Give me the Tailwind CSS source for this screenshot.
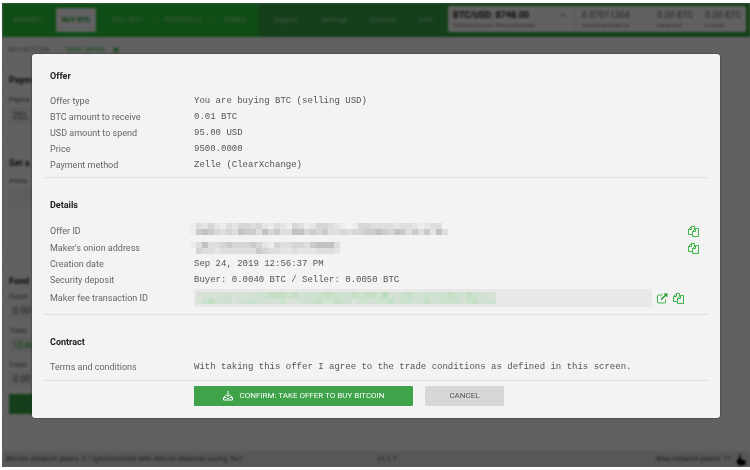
<!DOCTYPE html>
<html lang="en">
<head>
  <meta charset="UTF-8">
  <meta name="viewport" content="width=device-width, initial-scale=1.0">
  <title>Take offer</title>
  <script src="https://cdn.jsdelivr.net/npm/@tailwindcss/browser@4"></script>
</head>
<body class="bg-white font-['Roboto','Liberation_Sans',sans-serif]">

<div class="relative h-screen py-[3px] pl-[2px] overflow-hidden">

  <!-- Page behind the dialog -->
  <div class="h-full overflow-hidden bg-[#f3f3f3]" inert>
    <div class="h-full flex flex-col blur-[1px] text-[9px] leading-[10px] text-[#555]">
      <header class="flex h-[34px] shrink-0 bg-[#349e41] text-[7px] text-white/50">
        <nav class="flex items-center w-[256px] bg-[#2ac039]">
          <a href="#" class="w-[50px] text-center">MARKET</a>
          <a href="#" class="w-10 h-6 mx-1 flex items-center justify-center rounded-xs bg-[#f3f3f3] text-[#25a135] font-bold">BUY BTC</a>
          <a href="#" class="w-[54px] text-center">SELL BTC</a>
          <a href="#" class="w-[58px] text-center border-x border-white/10">PORTFOLIO</a>
          <a href="#" class="w-[46px] text-center">FUNDS</a>
        </nav>
        <nav class="flex flex-1 items-center justify-around px-1">
          <a href="#">Support</a>
          <a href="#">Settings</a>
          <a href="#">Account</a>
          <a href="#">DAO</a>
        </nav>
        <div class="flex w-[298px] h-[26px] mt-[3px] mr-1 rounded-xs bg-[#f3f3f3] text-[#555]">
          <div class="w-[126px] pl-[5px] pt-1">
            <div class="flex justify-between text-[9px] font-bold text-[#222]">BTC/USD: 8748.00
              <svg class="w-[6px] mr-[8px]" viewBox="0 0 6 10" fill="none" stroke="#666"><path d="M0.5 4 L3 6.5 L5.500 4"/></svg>
            </div>
            <div class="text-[6px] text-[#777]">Market price by BitcoinAverage</div>
          </div>
          <div class="w-[76px] pl-[7px] pt-1 border-l border-[#e0e0e0]">
            <div class="text-[9px]">0.07011304</div>
            <div class="text-[6px] text-[#777]">Available balance</div>
          </div>
          <div class="w-[48px] pl-[6px] pt-1 border-l border-[#e0e0e0]">
            <div class="text-[9px]">0.00 BTC</div>
            <div class="text-[6px] text-[#777]">Reserved</div>
          </div>
          <div class="w-[48px] pl-[6px] pt-1 border-l border-[#e0e0e0]">
            <div class="text-[9px]">0.00 BTC</div>
            <div class="text-[6px] text-[#777]">Locked</div>
          </div>
        </div>
      </header>

      <div class="flex items-center gap-4 h-[27px] px-[6px] shrink-0 border-b border-[#e4e4e4] text-[7px] text-[#888]">
        <span>BUY BITCOIN</span>
        <span class="flex gap-2 text-[#25b135]">TAKE OFFER
          <svg class="w-[6px] h-[10px]" viewBox="0 0 6 10" fill="none" stroke="#25b135" stroke-width="1.500"><path d="M0.500 2.500L5.500 7.500M5.500 2.500L0.500 7.500"/></svg>
        </span>
      </div>

      <main class="flex-1 min-h-0">
        <section class="h-[78px] px-[7px] pt-[11px] border-b border-[#e0e0e0]">
          <h2 class="font-bold text-[#222]">Paym</h2>
          <p class="mt-[10px] text-[7px]">Payme</p>
          <p class="w-60 h-4 mt-[3px] px-1 py-[3px] bg-[#e8e8e8]">ZEL</p>
        </section>
        <section class="h-[115px] px-[7px] pt-[16px] border-b border-[#e0e0e0]">
          <h2 class="font-bold text-[#222]">Set a</h2>
          <p class="mt-[8px] text-[7px]">Amou</p>
          <p class="w-60 h-[18px] mt-[3px] bg-[#e8e8e8]"></p>
        </section>
        <section class="px-[7px] pt-[19px]">
          <h2 class="font-bold text-[#222]">Fund</h2>
          <p class="mt-[6px] text-[7px]">Funds</p>
          <p class="w-60 h-4 mt-[1px] px-1 py-[3px] bg-[#e8e8e8]">0.00</p>
          <p class="mt-[7px] text-[7px]">Trade</p>
          <p class="w-60 h-4 mt-[1px] px-1 py-[3px] bg-[#e8e8e8] text-[#25b135]">1Esk</p>
          <p class="mt-[7px] text-[7px]">Trade</p>
          <p class="w-60 h-4 mt-[1px] px-1 py-[3px] bg-[#e8e8e8]">0.00</p>
          <div class="w-60 h-5 mt-[7px] bg-[#349e41]"></div>
        </section>
      </main>

      <footer class="flex items-center justify-between h-[16px] px-1 bg-[#dadada] font-['Noto_Sans',sans-serif] text-[7px] text-[#444]">
        <span class="flex-1">Bitcoin network peers: 9 / Synchronized with Bitcoin Mainnet (using Tor)</span>
        <span class="pl-[22px]">v1.1.7</span>
        <span class="flex flex-1 items-center justify-end gap-1">Bisq network peers: 11
          <svg class="w-[11px] h-[13px]" viewBox="0 0 11 13" fill="#000"><path d="M5 0C5 2 4 3 4 5C2 6 1 8 2 10C3 12 5 13 7 12.500C5 11 5 9 6 8C7 7 6 5 5.500 4C6 3 6 1 5 0Z"/><circle cx="8" cy="9.500" r="2.800"/></svg>
        </span>
      </footer>
    </div>
  </div>

  <!-- Dialog -->
  <div class="absolute top-[3px] bottom-[3px] left-[2px] right-0 bg-black/60 px-[30px] pt-[51px]">
    <div role="dialog" aria-label="Offer" class="rounded-[3px] bg-[#f3f3f3] px-3 pt-[14px] pb-3 text-[9px] leading-4 text-[#666] shadow-[0_0_2px_#222]">

      <section class="border-b border-[#e0e0e0] px-[6px] pb-1">
        <h2 class="mb-[9px] font-bold text-[#222]">Offer</h2>
        <dl class="grid grid-cols-[144px_1fr]">
          <dt>Offer type</dt>
          <dd class="font-['Liberation_Mono',monospace] text-[#555]">You are buying BTC (selling USD)</dd>
          <dt>BTC amount to receive</dt>
          <dd class="font-['Liberation_Mono',monospace] text-[#555]">0.01 BTC</dd>
          <dt>USD amount to spend</dt>
          <dd class="font-['Liberation_Mono',monospace] text-[#555]">95.00 USD</dd>
          <dt>Price</dt>
          <dd class="font-['Liberation_Mono',monospace] text-[#555]">9500.0000</dd>
          <dt>Payment method</dt>
          <dd class="font-['Liberation_Mono',monospace] text-[#555]">Zelle (ClearXchange)</dd>
        </dl>
      </section>

      <section class="border-b border-[#e0e0e0] px-[6px] pt-[19px] pb-[6px]">
        <h2 class="mb-[10px] font-bold text-[#222]">Details</h2>
        <dl class="grid grid-cols-[144px_1fr]">
          <dt class="h-[17px]">Offer ID</dt>
          <dd class="flex items-center justify-between pr-[3px]">
            <div class="self-start -ml-1 grid grid-rows-2 grid-flow-col auto-cols-[6px] h-3" data-top="1324213244342132143124432101443333233212330" data-bottom="1565434365536453366454533434455654653535263"></div>
            <button type="button" aria-label="Copy offer ID"><svg class="w-[11px] h-[11px]" viewBox="0 0 11 11" fill="none" stroke="#3fb54a"><path d="M4.500 8.500H0.500V3.500L3.500 0.500H6.500V3M0.500 3.500H3.500V0.500M7.500 2.500H10.500V10.500H4.500V5.500L7.500 2.500V5.500H4.500"/></svg></button>
          </dd>
          <dt>Maker's onion address</dt>
          <dd class="flex items-center justify-between pr-[3px]">
            <div class="-ml-1 grid grid-rows-2 grid-flow-col auto-cols-[6px] h-3" data-top="1363345444542143344356663" data-bottom="0433233333354332232223332"></div>
            <button type="button" aria-label="Copy onion address"><svg class="w-[11px] h-[11px]" viewBox="0 0 11 11" fill="none" stroke="#3fb54a"><path d="M4.500 8.500H0.500V3.500L3.500 0.500H6.500V3M0.500 3.500H3.500V0.500M7.500 2.500H10.500V10.500H4.500V5.500L7.500 2.500V5.500H4.500"/></svg></button>
          </dd>
          <dt>Creation date</dt>
          <dd class="font-['Liberation_Mono',monospace] text-[#555]">Sep 24, 2019 12:56:37 PM</dd>
          <dt>Security deposit</dt>
          <dd class="font-['Liberation_Mono',monospace] text-[#555]">Buyer: 0.0040 BTC / Seller: 0.0050 BTC</dd>
          <dt class="leading-5">Maker fee transaction ID</dt>
          <dd class="flex items-center gap-[5px] pr-[18px]">
            <div class="flex-1 h-[18px] py-[3px] pl-[2px] bg-[#e8e8e8]">
              <div class="grid grid-rows-2 grid-flow-col auto-cols-[6px] h-3" data-green data-top="22223323234455545343455434545546334543444454354332" data-bottom="24533423443333422334533543244344534433533444345334"></div>
            </div>
            <button type="button" aria-label="Open transaction"><svg class="w-[11px] h-[11px]" viewBox="0 0 11 11" fill="none" stroke="#3fb54a"><path d="M5.500 2H1.500Q0.500 2 0.500 3V9Q0.500 10 1.500 10H7.500Q8.500 10 8.500 9V6.500"/><path d="M4 6.500L9 2" stroke="#239c30" stroke-width="1.500"/><path d="M6.500 0.500H10.500V4.500Z" fill="#239c30" stroke="none"/></svg></button>
            <button type="button" aria-label="Copy transaction ID"><svg class="w-[11px] h-[11px]" viewBox="0 0 11 11" fill="none" stroke="#3fb54a"><path d="M4.500 8.500H0.500V3.500L3.500 0.500H6.500V3M0.500 3.500H3.500V0.500M7.500 2.500H10.500V10.500H4.500V5.500L7.500 2.500V5.500H4.500"/></svg></button>
          </dd>
        </dl>
      </section>

      <section class="border-b border-[#e0e0e0] px-[6px] pt-[19px] pb-[5px]">
        <h2 class="mb-[9px] font-bold text-[#222]">Contract</h2>
        <dl class="grid grid-cols-[144px_1fr]">
          <dt>Terms and conditions</dt>
          <dd class="font-['Liberation_Mono',monospace] text-[#555]">With taking this offer I agree to the trade conditions as defined in this screen.</dd>
        </dl>
      </section>

      <div class="flex gap-3 pt-[5px] pl-[150px] text-[8px]">
        <button type="button" class="flex items-center justify-center gap-[7px] w-[219px] h-5 rounded-[1px] bg-[#3fa34a] text-white">
          <svg class="w-[10px] h-[10px]" viewBox="0 0 10 10" fill="none" stroke="#fff"><path d="M5 0V5M3 3.500L5 5.500L7 3.500M2.500 4.500L0.500 7M7.500 4.500L9.500 7M0.500 6.500H3L4 7.500H6L7 6.500H9.500V9H0.500Z"/></svg>
          CONFIRM: TAKE OFFER TO BUY BITCOIN
        </button>
        <button type="button" class="w-[79px] h-5 rounded-[1px] bg-[#d7d7d7] text-[#555]">CANCEL</button>
      </div>
    </div>
  </div>
</div>

<script>
  // Redacted values: one digit per block, 0 = background, 6 = darkest
  const gray = ['#f3f3f3', '#ededed', '#e5e5e5', '#dedede', '#d6d6d6', '#cbcbcb', '#c2c2c2'];
  const green = ['#e8e8e8', '#e0e5e0', '#d9e2d9', '#d3e1d4', '#cce1ce', '#c4dfc6', '#b9dcbd'];

  document.querySelectorAll('[data-top]').forEach(el => {
    const shades = 'green' in el.dataset ? green : gray;
    const { top, bottom } = el.dataset;
    for (let i = 0; i < top.length; i++) {
      for (const digit of [top[i], bottom[i]]) {
        const block = document.createElement('i');
        block.style.background = shades[digit];
        el.appendChild(block);
      }
    }
  });
</script>

</body>
</html>
